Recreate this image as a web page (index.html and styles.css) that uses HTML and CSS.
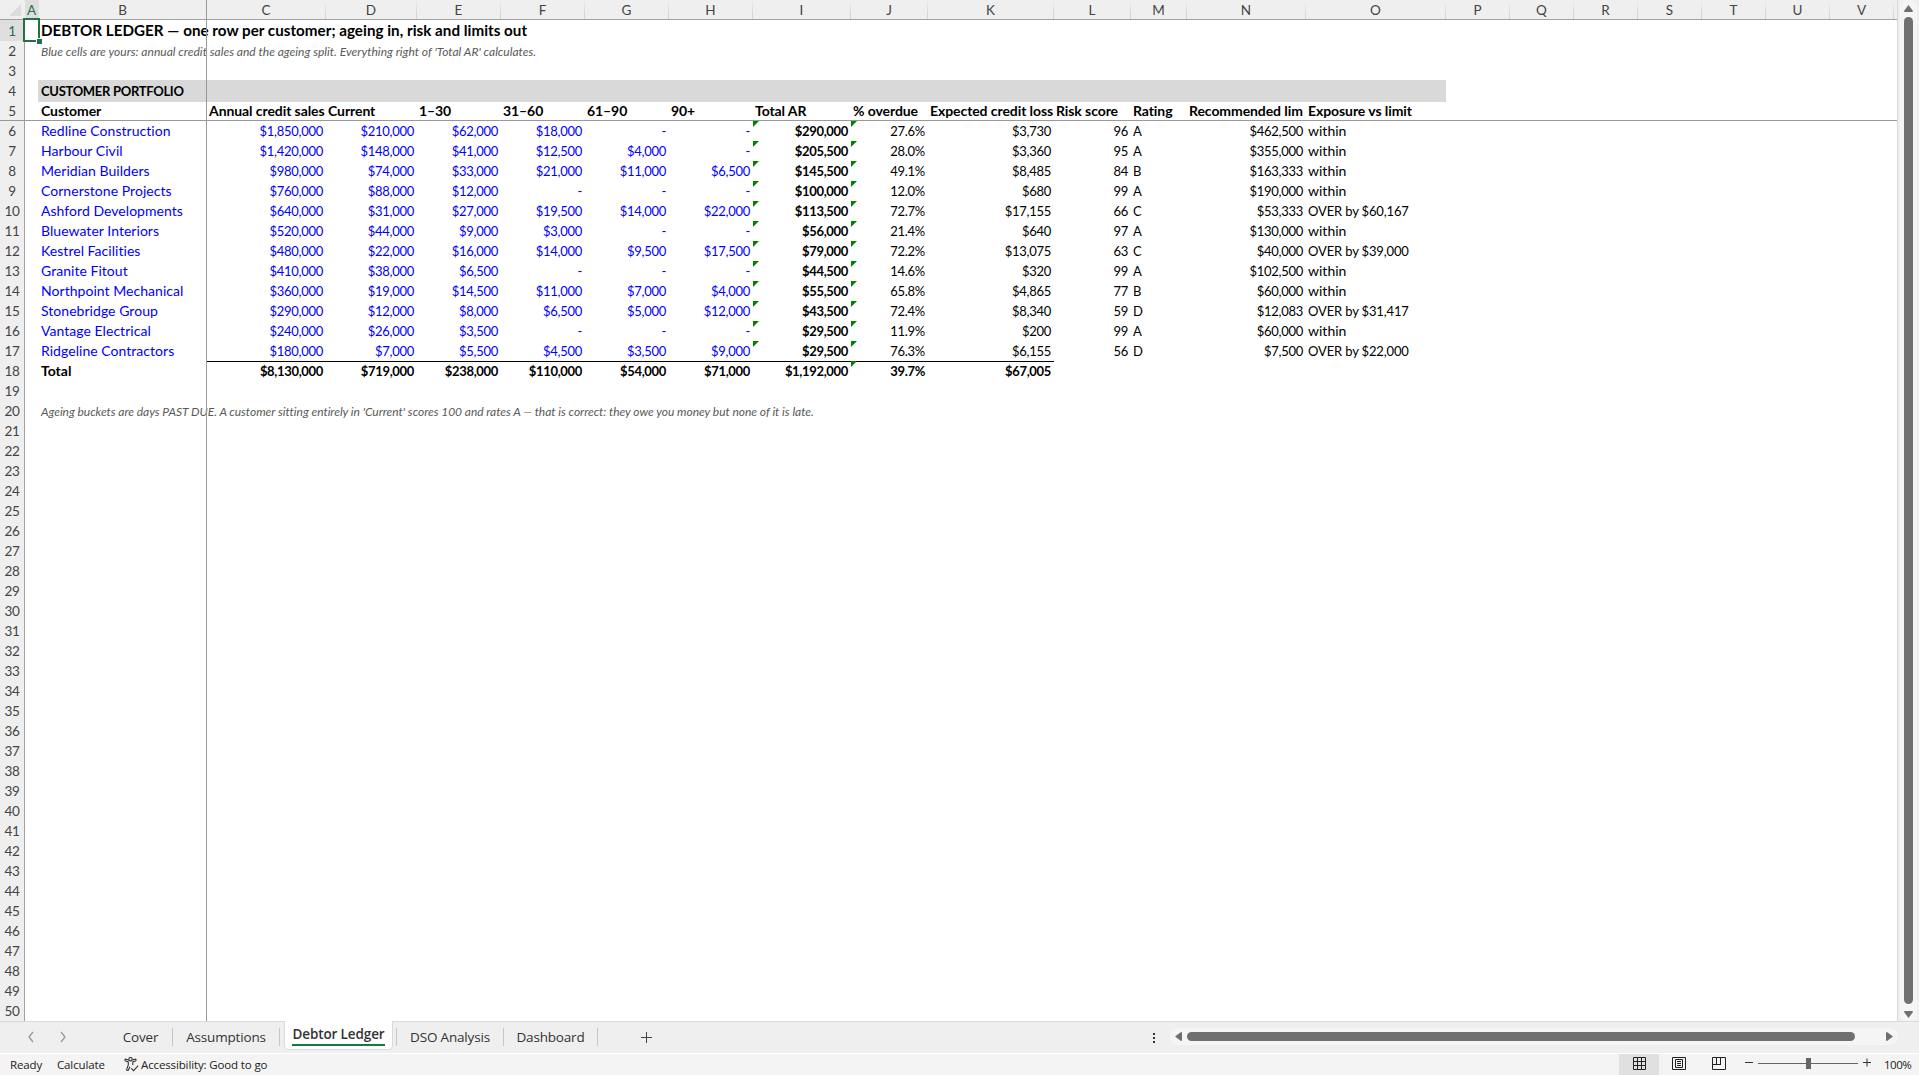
FILE: index.html
```html
<!DOCTYPE html>
<html lang="en">
<head>
    <meta charset="UTF-8">
    <meta name="viewport" content="width=device-width, initial-scale=1.0">
    <title>Debtor Ledger</title>
    <link rel="stylesheet" href="styles.css">
</head>
<body>
    <div class="workspace">
        <div class="sheet">
            <div class="grid" id="grid"></div>
            <div class="freeze-column"></div>
            <div class="freeze-row"></div>
            <div class="selection"><span class="fill-handle"></span></div>
        </div>
        <div class="scroll-side">
            <div class="track-y">
                <svg class="arrow-y" width="9" height="7" viewBox="0 0 9 7"><path d="M4.5 0 9 6q0 1-1 1H1Q0 7 0 6z"/></svg>
                <div class="thumb-y"></div>
                <svg class="arrow-y" width="9" height="7" viewBox="0 0 9 7"><path d="M4.5 7 0 1q0-1 1-1h7q1 0 1 1z"/></svg>
            </div>
        </div>
    </div>

    <div class="tab-bar">
        <div class="tab-arrows">
            <svg width="6" height="12" viewBox="0 0 6 12"><path d="M5 1 1 6l4 5"/></svg>
            <svg width="6" height="12" viewBox="0 0 6 12"><path d="M1 1l4 5-4 5"/></svg>
        </div>
        <div class="tabs">
            <div class="tab tab-cover">Cover</div>
            <div class="tab tab-assumptions">Assumptions</div>
            <div class="tab-active"><span>Debtor Ledger</span></div>
            <div class="tab tab-dso">DSO Analysis</div>
            <div class="tab tab-dashboard">Dashboard</div>
        </div>
        <svg class="add-tab" width="11" height="11" viewBox="0 0 11 11"><path d="M5.5 0v11M0 5.5h11"/></svg>
        <div class="dots"><i></i><i></i><i></i></div>
        <div class="track-x">
            <svg width="7" height="9" viewBox="0 0 7 9"><path d="M0 4.5 6 0q1 0 1 1v7q0 1-1 1z"/></svg>
            <div class="thumb-x"></div>
            <svg width="7" height="9" viewBox="0 0 7 9"><path d="M7 4.5 1 9Q0 9 0 8V1q0-1 1-1z"/></svg>
        </div>
    </div>

    <div class="status-bar">
        <span class="ready">Ready</span>
        <span class="calculate">Calculate</span>
        <svg class="access-icon" width="15" height="15" viewBox="0 0 15 15">
            <circle cx="6.5" cy="2.2" r="1.7"/>
            <path d="M4.8 3.1 2 2.2C.8 2 .6 3.5 1.6 4L4.3 5v3L2.7 12.3c-.3 1.2 1 1.6 1.6.8L6 9.8M8.2 3.1l2.8-.9c1.2-.2 1.5 1.3.4 1.8L8.8 5v3"/>
            <path d="M7.3 11.3l2.3 2.4 4.6-5"/>
        </svg>
        <span class="access-text">Accessibility: Good to go</span>
        <div class="views">
            <div class="view view-on">
                <svg width="13" height="13" viewBox="0 0 13 13"><path d="M.5.5h12v12H.5zM4.5 0v13M8.5 0v13M0 4.5h13M0 8.5h13"/></svg>
            </div>
            <div class="view">
                <svg width="14" height="13" viewBox="0 0 14 13"><path d="M.5.5h13v12H.5zM3.5 2.5h7v8h-7zM5 4.5h4M5 6.5h4M5 8.5h4"/></svg>
            </div>
            <div class="view">
                <svg width="14" height="13" viewBox="0 0 14 13"><path d="M.5.5h13v12H.5zM4.5 0v7M8.5 0v7.5M0 7.5h9"/></svg>
            </div>
        </div>
        <svg class="zoom-slider" width="126" height="13" viewBox="0 0 126 13">
            <path class="zoom-sign" d="M0 5.5h8M118 5.5h8M122 1.5v8"/>
            <path class="zoom-line" d="M13 6.5h100"/>
            <path class="zoom-thumb" d="M61 1h5v11h-5z"/>
        </svg>
        <span class="zoom-value">100%</span>
    </div>

    <script src="script.js"></script>
</body>
</html>
```
FILE: styles.css
```css
body {
    margin: 0;
    height: 1075px;
    display: flex;
    flex-direction: column;
    overflow: hidden;
    background: #efefef;
    font-family: 'Lato', 'Open Sans', sans-serif;
    color: #000;
}

.workspace {
    display: flex;
    height: 1021px;
}

.sheet {
    position: relative;
    width: 1897px;
    height: 1021px;
    overflow: hidden;
    background: #fff;
}

.row {
    display: grid;
    grid-template-columns: 25px 14px 168px 119px 91px 84px 84px 84px 84px 98px 77px 126px 77px 56px 119px 140px 64px 64px 64px 64px 64px 64px 64px 4px;
    height: 20px;
}

.row-1 {
    height: 21px;
}

/* column letters and row numbers */
.col-head {
    background: linear-gradient(to bottom, #efefef, #d0d0d0) right / 1px 100% no-repeat, #efefef;
    border-bottom: 1px solid #a0a0a0;
    box-sizing: border-box;
    height: 20px;
    padding-right: 1px;
    line-height: 21px;
    font-size: 13.5px;
    text-align: center;
    color: #444;
}

.corner {
    display: flex;
    justify-content: flex-end;
    padding: 4px 4px 0 0;
    background: #efefef;
}

.corner svg {
    fill: #dcdcdc;
}

.row-head {
    background: linear-gradient(to right, #efefef, #cfcfcf) bottom / 100% 1px no-repeat, #efefef;
    border-right: 1px solid #a0a0a0;
    box-sizing: border-box;
    line-height: 21px;
    font-size: 13.5px;
    letter-spacing: -0.4px;
    text-align: center;
    color: #444;
}

.col-head.picked,
.row-head.picked {
    background: #dedede;
    color: #217346;
}

.row-1 .row-head {
    line-height: 23px;
}

.cell {
    position: relative;
    box-sizing: border-box;
    padding: 0 3px 0 2px;
    line-height: 20px;
    font-size: 14px;
    white-space: nowrap;
}

.input {
    color: #0000ff;
    letter-spacing: 0.04px;
}

.num {
    font-size: 13px;
    letter-spacing: -0.27px;
    text-align: right;
}

.bold {
    font-weight: bold;
}

.heading {
    letter-spacing: -0.08px;
}

.num.bold {
    letter-spacing: -0.33px;
}

.title {
    font-size: 15.2px;
    font-weight: bold;
    line-height: 21px;
    letter-spacing: 0.02px;
}

.note {
    font-size: 12px;
    font-style: italic;
    line-height: 21px;
    letter-spacing: 0.02px;
    color: #595959;
}

.footnote {
    letter-spacing: -0.03px;
}

.section {
    background: #d9d9d9;
    margin-top: -1px;
    line-height: 22px;
    font-size: 13px;
    font-weight: bold;
    letter-spacing: -0.3px;
}

.section-start {
    margin-left: -1px;
    padding-left: 3px;
}

.over {
    font-size: 13px;
    letter-spacing: -0.15px;
}

.sum-line {
    box-shadow: inset 0 -1px #000;
}

.flag::before {
    content: '';
    position: absolute;
    left: 0;
    top: 0;
    border-top: 6px solid #008000;
    border-right: 6px solid transparent;
}

.freeze-column {
    position: absolute;
    left: 206px;
    top: 0;
    width: 1px;
    height: 1021px;
    background: #999;
}

.freeze-row {
    position: absolute;
    left: 0;
    top: 120px;
    width: 1897px;
    height: 1px;
    background: #999;
}

.selection {
    position: absolute;
    left: 23px;
    top: 18px;
    width: 13px;
    height: 20px;
    border: 2px solid #217346;
}

.fill-handle {
    position: absolute;
    right: -4px;
    bottom: -4px;
    width: 5px;
    height: 5px;
    background: #217346;
    border: 1px solid #fff;
    border-right: 0;
    border-bottom: 0;
}

.scroll-side {
    flex: 1;
    border-left: 1px solid #d8d8d8;
    display: flex;
    padding-left: 2px;
}

.track-y {
    width: 17px;
    height: 1023px;
    display: flex;
    flex-direction: column;
    align-items: center;
    border-radius: 8px;
    background: #f5f5f5;
    padding-top: 5px;
    box-sizing: border-box;
}

.thumb-y {
    width: 9px;
    height: 987px;
    margin: 5px 0 7px;
    border-radius: 5px;
    background: #707070;
}

.arrow-y,
.track-x svg {
    display: block;
    flex: none;
    fill: #707070;
}

.tab-bar {
    display: flex;
    height: 32px;
    box-sizing: border-box;
    border-top: 1px solid #dadada;
    font-family: 'Open Sans', 'Noto Sans', sans-serif;
    font-size: 13.5px;
    letter-spacing: -0.17px;
    color: #333;
}

.tab-arrows {
    display: flex;
    gap: 26px;
    padding: 9px 0 0 28px;
    width: 81px;
}

.tab-arrows svg {
    fill: none;
    stroke: #999;
    stroke-width: 1.3;
}

.tabs {
    display: flex;
    width: 490px;
}

.tab {
    box-sizing: border-box;
    height: 18px;
    margin-top: 6px;
    border-right: 1px solid #c6c6c6;
    line-height: 19px;
    text-align: center;
}

.tab-cover {
    width: 64px;
}

.tab-assumptions {
    width: 107px;
}

.tab-active {
    width: 107px;
    height: 28px;
    margin: -1px 3px 0 4px;
    border: 1px solid #dadada;
    border-top: 0;
    border-radius: 0 0 5px 5px;
    background: #fff;
    font-weight: 600;
    letter-spacing: -0.12px;
    text-align: center;
}

.tab-active span {
    display: inline-block;
    height: 23px;
    line-height: 26px;
    border-bottom: 2px solid #107c41;
}

.tab-dso {
    width: 108px;
    border-left: 1px solid #c6c6c6;
}

.tab-dashboard {
    width: 94px;
}

.add-tab {
    margin: 10px 0 0 42px;
    stroke: #444;
}

.dots {
    display: flex;
    flex-direction: column;
    gap: 2px;
    margin: 11px 0 0 501px;
    width: 17px;
}

.dots i {
    width: 2px;
    height: 2px;
    background: #333;
}

.track-x {
    display: flex;
    align-items: center;
    box-sizing: border-box;
    width: 728px;
    height: 17px;
    margin-top: 6px;
    padding-left: 5px;
    border-radius: 9px;
    background: #f5f5f5;
}

.thumb-x {
    width: 668px;
    height: 9px;
    margin: 0 31px 0 5px;
    border-radius: 5px;
    background: #707070;
}

.status-bar {
    display: flex;
    height: 22px;
    box-sizing: border-box;
    border-top: 1px solid #fff;
    background: #f4f4f4;
    font-family: 'Open Sans', 'Noto Sans', sans-serif;
    font-size: 11.5px;
    line-height: 22px;
    letter-spacing: -0.13px;
    color: #222;
    white-space: nowrap;
}

.ready {
    width: 47px;
    padding-left: 10px;
}

.calculate {
    width: 67px;
}

.access-icon {
    margin-top: 3px;
    fill: none;
    stroke: #333;
    stroke-width: 1.1;
}

.access-text {
    margin-left: 2px;
}

.views {
    display: flex;
    margin-left: auto;
}

.view {
    display: flex;
    justify-content: center;
    width: 40px;
    padding-top: 3px;
}

.view svg {
    fill: none;
    stroke: #222;
}

.view-on {
    background: #e0e0e0;
}

.zoom-slider {
    margin: 3px 0 0 6px;
}

.zoom-sign {
    stroke: #333;
}

.zoom-line {
    stroke: #666;
}

.zoom-thumb {
    fill: #666;
}

.zoom-value {
    width: 35px;
    margin-left: 13px;
    letter-spacing: -0.5px;
}
```
FILE: script.js
```js
const letters = ['A', 'B', 'C', 'D', 'E', 'F', 'G', 'H', 'I', 'J', 'K', 'L', 'M', 'N', 'O', 'P', 'Q', 'R', 'S', 'T', 'U', 'V', ''];
const headings = ['Customer', 'Annual credit sales', 'Current', '1–30', '31–60', '61–90', '90+', 'Total AR', '% overdue', 'Expected credit loss', 'Risk score', 'Rating', 'Recommended lim', 'Exposure vs limit'];

const customers = [
    ['Redline Construction', '$1,850,000', '$210,000', '$62,000', '$18,000', '-', '-', '$290,000', '27.6%', '$3,730', '96', 'A', '$462,500', 'within'],
    ['Harbour Civil', '$1,420,000', '$148,000', '$41,000', '$12,500', '$4,000', '-', '$205,500', '28.0%', '$3,360', '95', 'A', '$355,000', 'within'],
    ['Meridian Builders', '$980,000', '$74,000', '$33,000', '$21,000', '$11,000', '$6,500', '$145,500', '49.1%', '$8,485', '84', 'B', '$163,333', 'within'],
    ['Cornerstone Projects', '$760,000', '$88,000', '$12,000', '-', '-', '-', '$100,000', '12.0%', '$680', '99', 'A', '$190,000', 'within'],
    ['Ashford Developments', '$640,000', '$31,000', '$27,000', '$19,500', '$14,000', '$22,000', '$113,500', '72.7%', '$17,155', '66', 'C', '$53,333', 'OVER by $60,167'],
    ['Bluewater Interiors', '$520,000', '$44,000', '$9,000', '$3,000', '-', '-', '$56,000', '21.4%', '$640', '97', 'A', '$130,000', 'within'],
    ['Kestrel Facilities', '$480,000', '$22,000', '$16,000', '$14,000', '$9,500', '$17,500', '$79,000', '72.2%', '$13,075', '63', 'C', '$40,000', 'OVER by $39,000'],
    ['Granite Fitout', '$410,000', '$38,000', '$6,500', '-', '-', '-', '$44,500', '14.6%', '$320', '99', 'A', '$102,500', 'within'],
    ['Northpoint Mechanical', '$360,000', '$19,000', '$14,500', '$11,000', '$7,000', '$4,000', '$55,500', '65.8%', '$4,865', '77', 'B', '$60,000', 'within'],
    ['Stonebridge Group', '$290,000', '$12,000', '$8,000', '$6,500', '$5,000', '$12,000', '$43,500', '72.4%', '$8,340', '59', 'D', '$12,083', 'OVER by $31,417'],
    ['Vantage Electrical', '$240,000', '$26,000', '$3,500', '-', '-', '-', '$29,500', '11.9%', '$200', '99', 'A', '$60,000', 'within'],
    ['Ridgeline Contractors', '$180,000', '$7,000', '$5,500', '$4,500', '$3,500', '$9,000', '$29,500', '76.3%', '$6,155', '56', 'D', '$7,500', 'OVER by $22,000']
];
const totals = ['Total', '$8,130,000', '$719,000', '$238,000', '$110,000', '$54,000', '$71,000', '$1,192,000', '39.7%', '$67,005'];

function cell(text, cls) {
    return `<div class="cell ${cls || ''}">${text}</div>`;
}

function customerCell(text, i, last) {
    let cls = '';
    if (i < 7) cls += ' input';
    if (i > 0 && i !== 11 && i !== 13) cls += ' num';
    if (i === 7) cls += ' bold';
    if (i === 7 || i === 8) cls += ' flag';
    if (text.startsWith('OVER') || i === 11) cls += ' over';
    if (last && i > 0 && i < 10) cls += ' sum-line';
    return cell(text, cls);
}

function rowCells(n) {
    const blank = cell('');
    if (n === 1) return blank + cell('DEBTOR LEDGER — one row per customer; ageing in, risk and limits out', 'title');
    if (n === 2) return blank + cell("Blue cells are yours: annual credit sales and the ageing split. Everything right of 'Total AR' calculates.", 'note');
    if (n === 4) return blank + cell('CUSTOMER PORTFOLIO', 'section section-start') + cell('', 'section').repeat(13);
    if (n === 5) return blank + headings.map(h => cell(h, 'bold heading')).join('');
    if (n >= 6 && n <= 17) return blank + customers[n - 6].map((t, i) => customerCell(t, i, n === 17)).join('');
    if (n === 18) return blank + totals.map((t, i) => cell(t, 'bold' + (i ? ' num' : '') + (i === 8 ? ' flag' : ''))).join('');
    if (n === 20) return blank + cell("Ageing buckets are days PAST DUE. A customer sitting entirely in 'Current' scores 100 and rates A — that is correct: they owe you money but none of it is late.", 'note footnote');
    return '';
}

let html = '<div class="row"><div class="col-head corner"><svg width="12" height="12"><path d="M12 0v12H0z"/></svg></div>';
html += letters.map((l, i) => `<div class="col-head${i === 0 ? ' picked' : ''}">${l}</div>`).join('') + '</div>';
for (let n = 1; n <= 50; n++) {
    html += `<div class="row row-${n}"><div class="row-head${n === 1 ? ' picked' : ''}">${n}</div>${rowCells(n)}</div>`;
}
document.getElementById('grid').innerHTML = html;
```
